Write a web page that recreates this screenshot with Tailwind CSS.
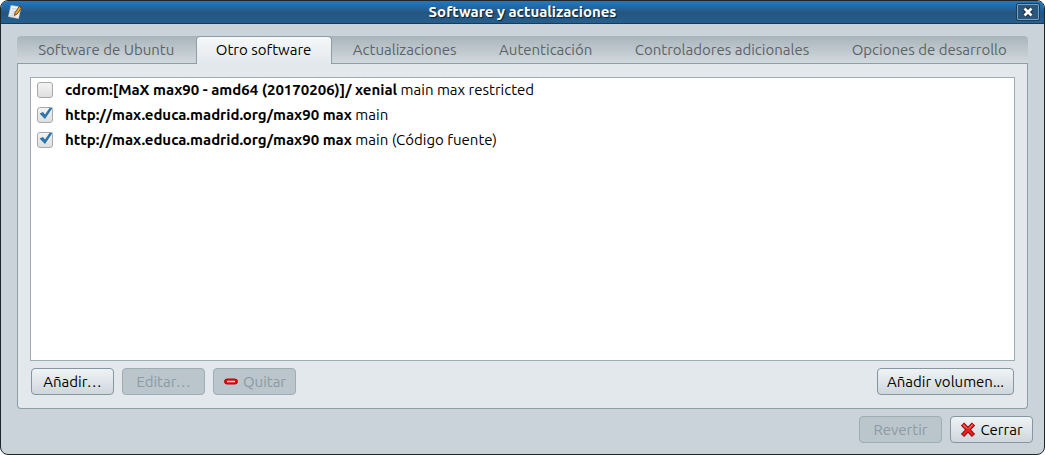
<!DOCTYPE html>
<html lang="es">
<head>
    <meta charset="UTF-8">
    <meta name="viewport" content="width=device-width, initial-scale=1.0">
    <!-- Tailwind -->
    <script src="https://cdn.jsdelivr.net/npm/@tailwindcss/browser@4"></script>
    <title>Software y actualizaciones</title>
</head>
<body class="bg-white font-['Ubuntu','Noto_Sans',sans-serif] text-[15px] leading-5 text-black">
    <!-- Ventana -->
    <div class="flex h-screen flex-col overflow-hidden rounded-lg border border-[#1c262b] bg-[#cbd3da]">
        <!-- Barra de titulo -->
        <header class="flex h-[23px] shrink-0 items-center border-b border-[#1b3a54] bg-linear-to-b from-[#2279c2] via-[#24557f] via-55% to-[#265f8d] px-1">
            <svg class="mr-1.5 ml-0.5 size-4 shrink-0" viewBox="0 0 16 16" aria-hidden="true">
                <path d="M4 1.5 14 3 11.5 14.5 1.5 12.5z" fill="#eef1f4" stroke="#c5ced6" stroke-width=".7"/>
                <path d="M5 4.5 9 5M4.5 7l3 .5M4 9.500l5 .8M3.500 11.500l5 .8" stroke="#bcc5cf" stroke-width=".8"/>
                <path d="M12.500 2 14.500 4 10 10 7.500 11.500 8 8.500z" fill="#f5a623" stroke="#5c4118" stroke-width=".9"/>
                <path d="M12 2.500 13.200 1 15.200 2.800 14 4.600z" fill="#4d5257"/>
            </svg>
            <h1 class="grow text-center font-semibold text-white [text-shadow:1px_1px_1px_#0a2036]">Software y actualizaciones</h1>
            <button type="button" aria-label="Cerrar ventana" class="flex h-[18px] w-6 shrink-0 items-center justify-center rounded-xs border border-[#173c5c] bg-[#27567e] inset-ring inset-ring-[#7e9fb9]">
                <svg class="h-2.5 w-3" viewBox="0 0 12 10" aria-hidden="true">
                    <path d="M2.500 1.500 9.500 8.500M9.500 1.500 2.500 8.500" stroke="#16202a" stroke-width="4.500"/>
                    <path d="M2.500 1.500 9.500 8.500M9.500 1.500 2.500 8.500" stroke="#fff" stroke-width="2.800"/>
                </svg>
            </button>
        </header>

        <main class="flex min-h-0 grow flex-col px-4 pt-3">
            <!-- Pestañas -->
            <div role="tablist" class="flex h-7 shrink-0 rounded-t bg-linear-to-b from-[#a9b5bc] to-[#d3dade] text-[#5c6467]">
                <button type="button" role="tab" class="flex-auto border-b border-[#8b9fa5] px-4">Software de Ubuntu</button>
                <button type="button" role="tab" aria-selected="true" class="flex-auto rounded-t border border-b-0 border-[#8b9fa5] bg-linear-to-b from-[#f6f8f9] to-[#e3e8ec] px-3.5 pb-0.5 text-black">Otro software</button>
                <button type="button" role="tab" class="flex-auto border-b border-[#8b9fa5] px-4">Actualizaciones</button>
                <button type="button" role="tab" class="flex-auto border-b border-[#8b9fa5] px-4">Autenticación</button>
                <button type="button" role="tab" class="flex-auto border-b border-[#8b9fa5] px-4">Controladores adicionales</button>
                <button type="button" role="tab" class="flex-auto border-b border-[#8b9fa5] px-4">Opciones de desarrollo</button>
            </div>

            <!-- Origenes de software -->
            <section class="flex min-h-0 grow flex-col gap-[7px] rounded-b border border-t-0 border-[#8b9fa5] bg-[#e3e8ec] px-3 py-[13px]">
                <ul class="grow border border-[#9cacb2] bg-white px-1.5">
                    <li>
                        <label class="flex h-[25px] items-center gap-3 pb-px">
                            <input type="checkbox" class="size-4 appearance-none rounded-[3px] border border-[#a9a9a9] bg-linear-to-b from-[#f3f3f3] to-[#dfdfdf]">
                            <span><b>cdrom:[MaX max90 - amd64 (20170206)]/ xenial</b> main max restricted</span>
                        </label>
                    </li>
                    <li>
                        <label class="flex h-[25px] items-center gap-3 pb-px">
                            <span class="grid size-4">
                                <input type="checkbox" checked class="peer col-start-1 row-start-1 size-4 appearance-none rounded-[3px] border border-[#a9a9a9] bg-linear-to-b from-[#f3f3f3] to-[#dfdfdf]">
                                <svg class="invisible col-start-1 row-start-1 size-4 overflow-visible peer-checked:visible" viewBox="0 0 16 16" aria-hidden="true"><path d="M2.500 6.500 6 5 8 7.500 12.500 1 15.800.5 8 12z" fill="#2d75ab"/></svg>
                            </span>
                            <span><b>http://max.educa.madrid.org/max90 max</b> main</span>
                        </label>
                    </li>
                    <li>
                        <label class="flex h-[25px] items-center gap-3 pb-px">
                            <span class="grid size-4">
                                <input type="checkbox" checked class="peer col-start-1 row-start-1 size-4 appearance-none rounded-[3px] border border-[#a9a9a9] bg-linear-to-b from-[#f3f3f3] to-[#dfdfdf]">
                                <svg class="invisible col-start-1 row-start-1 size-4 overflow-visible peer-checked:visible" viewBox="0 0 16 16" aria-hidden="true"><path d="M2.500 6.500 6 5 8 7.500 12.500 1 15.800.5 8 12z" fill="#2d75ab"/></svg>
                            </span>
                            <span><b>http://max.educa.madrid.org/max90 max</b> main (Código fuente)</span>
                        </label>
                    </li>
                </ul>
                <div class="flex h-[27px] shrink-0 gap-2 px-px">
                    <button type="button" class="min-w-[83px] rounded border border-[#8496a0] bg-linear-to-b from-[#f0f3f4] to-[#cfd7dc]">Añadir…</button>
                    <button type="button" disabled class="min-w-[83px] rounded border border-[#9dadb6] bg-[#bac5cc] text-[#8c9ba4]">Editar…</button>
                    <button type="button" disabled class="flex min-w-[83px] items-center justify-center gap-1 rounded border border-[#9dadb6] bg-[#bac5cc] text-[#8c9ba4]">
                        <svg class="size-4" viewBox="0 0 16 16" aria-hidden="true"><rect x="1.500" y="5" width="13" height="5" rx="2.500" fill="#d8100d" stroke="#b90505"/><path d="M4 7.500h8" stroke="#f7dcd4" stroke-width="1.500"/></svg>
                        Quitar
                    </button>
                    <button type="button" class="ml-auto min-w-[137px] rounded border border-[#8496a0] bg-linear-to-b from-[#f0f3f4] to-[#cfd7dc]">Añadir volumen...</button>
                </div>
            </section>
        </main>

        <footer class="flex shrink-0 justify-end gap-2 px-[11px] pt-[7px] pb-[11px]">
            <button type="button" disabled class="h-[27px] min-w-[83px] rounded border border-[#9dadb6] bg-[#bac5cc] text-[#8c9ba4]">Revertir</button>
            <button type="button" class="flex h-[27px] min-w-[83px] items-center justify-center gap-1 rounded border border-[#8496a0] bg-linear-to-b from-[#f0f3f4] to-[#cfd7dc]">
                <svg class="size-4" viewBox="0 0 16 16" aria-hidden="true"><path d="M2.500 2 13.500 13.500M13.500 2 2.500 13.500" stroke="#7c0b0b" stroke-width="4.500"/><path d="M3 2.500 13 13M13 2.500 3 13" stroke="#ec1c1c" stroke-width="2.800"/><path d="M3 2.500 7 6.500M12.500 2.500 9 6.500" stroke="#fa9a93" stroke-width="1"/></svg>
                Cerrar
            </button>
        </footer>
    </div>
</body>
</html>
